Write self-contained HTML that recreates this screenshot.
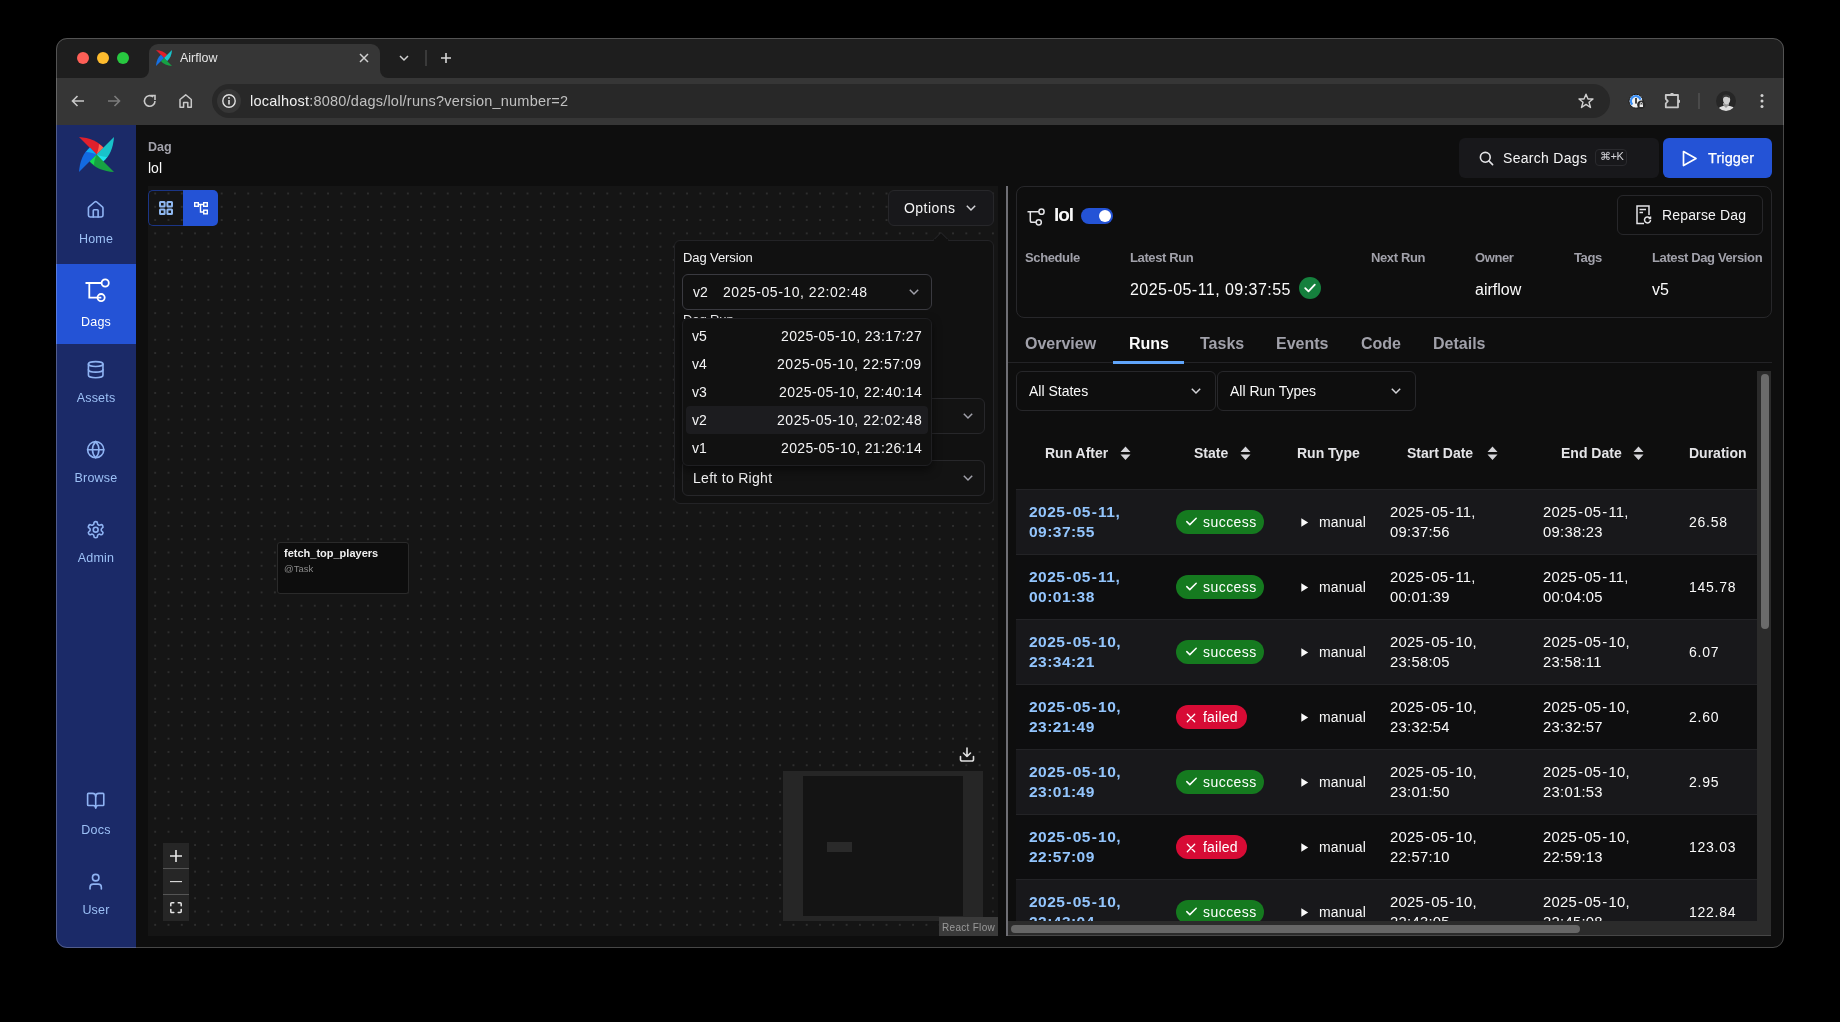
<!DOCTYPE html>
<html><head><meta charset="utf-8">
<style>
*{box-sizing:border-box;margin:0;padding:0}
html,body{width:1840px;height:1022px;overflow:hidden;background:#000;font-family:"Liberation Sans",sans-serif;color:#fafafa}
.a{position:absolute}
svg{display:block;overflow:visible}
.win{position:absolute;left:56px;top:38px;width:1728px;height:910px;border-radius:11px;overflow:hidden;background:#0e0e0e}
.winborder{position:absolute;left:56px;top:38px;width:1728px;height:910px;border-radius:11px;border:1px solid rgba(255,255,255,0.24);pointer-events:none}
.t{position:absolute;white-space:nowrap;line-height:1;will-change:transform}
</style></head>
<body>
<div class="win">
  <div class="a" style="left:0;top:0;width:1728px;height:40px;background:#1e1e1e"></div>
  <div class="a" style="left:0;top:40px;width:1728px;height:47px;background:#363636"></div>
  <div class="a" style="left:0;top:87px;width:80px;height:823px;background:#1b2a68"></div>
</div>
<div id="chrome">
  <!-- active tab -->
  <div class="a" style="left:149px;top:44px;width:231px;height:34px;background:#363636;border-radius:9px 9px 0 0"></div>
  <svg class="a" style="left:141px;top:70px" width="8" height="8"><path d="M8 0 V8 H0 A8 8 0 0 0 8 0Z" fill="#363636"/></svg>
  <svg class="a" style="left:380px;top:70px" width="8" height="8"><path d="M0 0 V8 H8 A8 8 0 0 1 0 0Z" fill="#363636"/></svg>
  <div class="a" style="left:77px;top:52px;width:12px;height:12px;border-radius:50%;background:#fe5f57"></div>
  <div class="a" style="left:97px;top:52px;width:12px;height:12px;border-radius:50%;background:#febc2e"></div>
  <div class="a" style="left:117px;top:52px;width:12px;height:12px;border-radius:50%;background:#28c840"></div>
  <svg class="a" style="left:156px;top:50px" width="16" height="16" viewBox="0 0 100 100">
    <path d="M0 0C30 2 55 12 70 31L50 50Z" fill="#e0202c"/>
    <path d="M100 0C98 30 88 55 69 70L50 50Z" fill="#18c4cc"/>
    <path d="M100 100C70 98 45 88 30 69L50 50Z" fill="#16a244"/>
    <path d="M0 100C2 70 12 45 31 30L50 50Z" fill="#1570e4"/>
  </svg>
  <div class="t" style="left:180px;top:52px;font-size:12.5px;color:#e6e6e6">Airflow</div>
  <svg class="a" style="left:359px;top:53px" width="10" height="10"><path d="M1 1L9 9M9 1L1 9" stroke="#d0d0d0" stroke-width="1.5"/></svg>
  <svg class="a" style="left:399px;top:55px" width="10" height="6"><path d="M1 1L5 5L9 1" stroke="#d0d0d0" stroke-width="1.5" fill="none"/></svg>
  <div class="a" style="left:424.5px;top:50px;width:2px;height:16px;background:#3a3a3a"></div>
  <svg class="a" style="left:441px;top:53px" width="10" height="10"><path d="M5 0V10M0 5H10" stroke="#d8d8d8" stroke-width="1.6"/></svg>
  <!-- nav icons -->
  <svg class="a" style="left:71px;top:95px" width="14" height="12"><path d="M13 6H1.5M6.5 1L1.5 6L6.5 11" stroke="#c8c8c8" stroke-width="1.6" fill="none"/></svg>
  <svg class="a" style="left:107px;top:95px" width="14" height="12"><path d="M1 6H12.5M7.5 1L12.5 6L7.5 11" stroke="#7c7c7c" stroke-width="1.6" fill="none"/></svg>
  <svg class="a" style="left:143px;top:94px" width="14" height="14"><path d="M12 7A5.3 5.3 0 1 1 10.2 3" stroke="#c8c8c8" stroke-width="1.6" fill="none"/><path d="M7.5 1.5H12V6" stroke="#c8c8c8" stroke-width="1.6" fill="none"/></svg>
  <svg class="a" style="left:179px;top:94px" width="14" height="14"><path d="M1 13.2V5.5L6.7 0.8L12.3 5.5V13.2H8.8V8.5H4.6V13.2Z" stroke="#c8c8c8" stroke-width="1.5" fill="none" stroke-linejoin="round"/></svg>
  <!-- url bar -->
  <div class="a" style="left:212px;top:84px;width:1398px;height:34px;border-radius:17px;background:#282828"></div>
  <div class="a" style="left:217px;top:89px;width:24px;height:24px;border-radius:50%;background:#363636"></div>
  <svg class="a" style="left:222px;top:94px" width="14" height="14"><circle cx="7" cy="7" r="6.2" stroke="#e0e0e0" stroke-width="1.4" fill="none"/><path d="M7 6V10.5" stroke="#e0e0e0" stroke-width="1.6"/><circle cx="7" cy="4" r="0.9" fill="#e0e0e0"/></svg>
  <div class="t" style="left:249.5px;top:94px;font-size:14.5px;letter-spacing:0.22px;color:#f0f0f0">localhost<span style="color:#c0c0c0">:8080/dags/lol/runs?version_number=2</span></div>
  <svg class="a" style="left:1578px;top:93px" width="16" height="16"><path d="M8 1.2L10 6H15L11 9.2L12.5 14.5L8 11.4L3.5 14.5L5 9.2L1 6H6Z" stroke="#d0d0d0" stroke-width="1.4" fill="none" stroke-linejoin="round"/></svg>
  <!-- 1password -->
  <svg class="a" style="left:1628px;top:93px" width="18" height="18"><circle cx="8" cy="8.2" r="7" fill="#f2f2f2" stroke="#151515" stroke-width="1"/><path d="M4.3 11.6A5 5 0 1 1 12.6 6.6" fill="none" stroke="#3a8ff5" stroke-width="2.2"/><rect x="7.2" y="5" width="1.6" height="5.6" fill="#1a1a1a"/><circle cx="13.3" cy="11.8" r="4.2" fill="#2a2a2a"/><rect x="11.6" y="11.4" width="3.4" height="2.6" fill="#eee"/><path d="M12.3 11.4V10.4A1 1 0 0 1 14.3 10.4V11.4" fill="none" stroke="#eee" stroke-width="1"/></svg>
  <svg class="a" style="left:1664px;top:92px" width="17" height="17"><path d="M1.8 3H14V15.3H1.8V11.5L3.8 9.2L1.8 6.8Z" fill="none" stroke="#c8c8c8" stroke-width="1.8" stroke-linejoin="round"/><path d="M5.6 3.2L6.8 1H9.2L10.4 3.2Z" fill="#c8c8c8"/><path d="M13.8 7L16 8.2V10.4L13.8 11.6Z" fill="#c8c8c8"/></svg>
  <div class="a" style="left:1698px;top:93px;width:2px;height:16px;background:#4a4a4a"></div>
  <svg class="a" style="left:1716px;top:91px" width="20" height="20"><defs><clipPath id="av"><circle cx="10" cy="10" r="10"/></clipPath></defs><g clip-path="url(#av)"><rect width="20" height="20" fill="#262626"/><ellipse cx="10.5" cy="20" rx="9" ry="5.5" fill="#e0e0e0"/><path d="M7 14L10 17L13 14V12H7Z" fill="#9a9a9a"/><ellipse cx="10.6" cy="8.8" rx="3.6" ry="4.6" fill="#cfcfcf"/><path d="M6.3 7.2Q6.5 3.5 10 3.6Q13.5 3.5 13.7 7.2Q12 5.6 10 5.7Q8 5.6 6.3 7.2Z" fill="#3a3a3a"/></g></svg>
  <svg class="a" style="left:1759px;top:93px" width="6" height="16"><circle cx="3" cy="2.5" r="1.5" fill="#d0d0d0"/><circle cx="3" cy="8" r="1.5" fill="#d0d0d0"/><circle cx="3" cy="13.5" r="1.5" fill="#d0d0d0"/></svg>
</div>

<div id="sidebar">
  <svg class="a" style="left:79px;top:137px" width="35" height="35" viewBox="0 0 100 100">
    <path d="M0 0C30 2 55 12 70 31L50 50Z" fill="#e0202c"/>
    <path d="M57 20C62 23 66 27 70 31L50 50C54 40 57 30 57 20Z" fill="#fd6450"/>
    <path d="M100 0C98 30 88 55 69 70L50 50Z" fill="#18c2ca"/>
    <path d="M80 57C77 62 73 66 69 70L50 50C60 54 70 57 80 57Z" fill="#1ee2ec"/>
    <path d="M100 100C70 98 45 88 30 69L50 50Z" fill="#17a243"/>
    <path d="M43 80C38 77 34 73 30 69L50 50C46 60 43 70 43 80Z" fill="#15dc52"/>
    <path d="M0 100C2 70 12 45 31 30L50 50Z" fill="#136ae2"/>
    <path d="M20 43C23 38 27 34 31 30L50 50C40 46 30 43 20 43Z" fill="#10a8f2"/>
  </svg>
  <!-- Dags selected -->
  <div class="a" style="left:56px;top:264px;width:80px;height:80px;background:#2453d6"></div>
  <!-- Home -->
  <svg class="a" style="left:86.3px;top:200.3px" width="19.4" height="19.4" viewBox="0 0 24 24" fill="none" stroke="#8fb3f3" stroke-width="2" stroke-linecap="round" stroke-linejoin="round"><path d="M15 21v-8a1 1 0 0 0-1-1h-4a1 1 0 0 0-1 1v8"/><path d="M3 10a2 2 0 0 1 .709-1.528l7-5.999a2 2 0 0 1 2.582 0l7 5.999A2 2 0 0 1 21 10v9a2 2 0 0 1-2 2H5a2 2 0 0 1-2-2z"/></svg>
  <div class="t" style="left:56px;width:80px;text-align:center;top:232.5px;font-size:12.5px;letter-spacing:0.2px;color:#9cc0f6">Home</div>
  <!-- Dags -->
  <svg class="a" style="left:85px;top:278px" width="26" height="24" fill="none" stroke="#fff" stroke-width="1.8"><path d="M0.5 5H16.5M4.3 5V19.6H16.3"/><circle cx="20.2" cy="5" r="3.6"/><circle cx="16.1" cy="19.6" r="3.6"/></svg>
  <div class="t" style="left:56px;width:80px;text-align:center;top:316px;font-size:12.5px;letter-spacing:0.2px;color:#fff">Dags</div>
  <!-- Assets -->
  <svg class="a" style="left:86.3px;top:360.3px" width="19.4" height="19.4" viewBox="0 0 24 24" fill="none" stroke="#8fb3f3" stroke-width="2" stroke-linecap="round" stroke-linejoin="round"><ellipse cx="12" cy="5" rx="9" ry="3"/><path d="M3 5V19A9 3 0 0 0 21 19V5"/><path d="M3 12A9 3 0 0 0 21 12"/></svg>
  <div class="t" style="left:56px;width:80px;text-align:center;top:392px;font-size:12.5px;letter-spacing:0.2px;color:#9cc0f6">Assets</div>
  <!-- Browse -->
  <svg class="a" style="left:86.3px;top:440.3px" width="19.4" height="19.4" viewBox="0 0 24 24" fill="none" stroke="#8fb3f3" stroke-width="2" stroke-linecap="round" stroke-linejoin="round"><circle cx="12" cy="12" r="10"/><path d="M12 2a14.5 14.5 0 0 0 0 20 14.5 14.5 0 0 0 0-20"/><path d="M2 12h20"/></svg>
  <div class="t" style="left:56px;width:80px;text-align:center;top:471.5px;font-size:12.5px;letter-spacing:0.2px;color:#9cc0f6">Browse</div>
  <!-- Admin -->
  <svg class="a" style="left:86.3px;top:520.3px" width="19.4" height="19.4" viewBox="0 0 24 24" fill="none" stroke="#8fb3f3" stroke-width="2" stroke-linecap="round" stroke-linejoin="round"><path d="M12.22 2h-.44a2 2 0 0 0-2 2v.18a2 2 0 0 1-1 1.73l-.43.25a2 2 0 0 1-2 0l-.15-.08a2 2 0 0 0-2.73.73l-.22.38a2 2 0 0 0 .73 2.73l.15.1a2 2 0 0 1 1 1.72v.51a2 2 0 0 1-1 1.74l-.15.09a2 2 0 0 0-.73 2.73l.22.38a2 2 0 0 0 2.73.73l.15-.08a2 2 0 0 1 2 0l.43.25a2 2 0 0 1 1 1.73V20a2 2 0 0 0 2 2h.44a2 2 0 0 0 2-2v-.18a2 2 0 0 1 1-1.73l.43-.25a2 2 0 0 1 2 0l.15.08a2 2 0 0 0 2.73-.73l.22-.39a2 2 0 0 0-.73-2.73l-.15-.08a2 2 0 0 1-1-1.74v-.5a2 2 0 0 1 1-1.74l.15-.09a2 2 0 0 0 .73-2.73l-.22-.38a2 2 0 0 0-2.73-.73l-.15.08a2 2 0 0 1-2 0l-.43-.25a2 2 0 0 1-1-1.73V4a2 2 0 0 0-2-2z"/><circle cx="12" cy="12" r="3"/></svg>
  <div class="t" style="left:56px;width:80px;text-align:center;top:551.5px;font-size:12.5px;letter-spacing:0.2px;color:#9cc0f6">Admin</div>
  <!-- Docs -->
  <svg class="a" style="left:86.3px;top:791.3px" width="19.4" height="19.4" viewBox="0 0 24 24" fill="none" stroke="#8fb3f3" stroke-width="2" stroke-linecap="round" stroke-linejoin="round"><path d="M12 7v14"/><path d="M3 18a1 1 0 0 1-1-1V4a1 1 0 0 1 1-1h5a4 4 0 0 1 4 4 4 4 0 0 1 4-4h5a1 1 0 0 1 1 1v13a1 1 0 0 1-1 1h-6a3 3 0 0 0-3 3 3 3 0 0 0-3-3z"/></svg>
  <div class="t" style="left:56px;width:80px;text-align:center;top:823.5px;font-size:12.5px;letter-spacing:0.2px;color:#9cc0f6">Docs</div>
  <!-- User -->
  <svg class="a" style="left:86.3px;top:872.3px" width="19.4" height="19.4" viewBox="0 0 24 24" fill="none" stroke="#8fb3f3" stroke-width="2" stroke-linecap="round" stroke-linejoin="round"><path d="M19 21v-2a4 4 0 0 0-4-4H9a4 4 0 0 0-4 4v2"/><circle cx="12" cy="7" r="4"/></svg>
  <div class="t" style="left:56px;width:80px;text-align:center;top:903.5px;font-size:12.5px;letter-spacing:0.2px;color:#9cc0f6">User</div>
</div>

<div id="left">
  <div class="t" style="left:148px;top:140.5px;font-size:12.5px;font-weight:bold;color:#a1a1aa">Dag</div>
  <div class="t" style="left:148px;top:161px;font-size:14px;color:#fafafa">lol</div>
  <!-- canvas -->
  <div class="a" style="left:148px;top:186px;width:850px;height:750px;background-color:#151515;background-image:radial-gradient(circle,#2e2e2e 0.7px,rgba(0,0,0,0) 1.2px);background-size:13.3px 13.3px;background-position:0.55px 0.85px"></div>
  <!-- separator -->
  <div class="a" style="left:1006px;top:186px;width:2px;height:750px;background:#6e6e74"></div>
  <!-- view toggle -->
  <div class="a" style="left:148px;top:190px;width:36px;height:36px;border:1px solid #1b3585;border-right:none;border-radius:5px 0 0 5px"></div>
  <div class="a" style="left:183px;top:190px;width:35px;height:36px;background:#2453d6;border-radius:0 5px 5px 0"></div>
  <svg class="a" style="left:159px;top:201px" width="14" height="14" fill="none" stroke="#8fb8f0" stroke-width="2"><rect x="1" y="1" width="4.6" height="4.6" rx="0.5"/><rect x="8.4" y="1" width="4.6" height="4.6" rx="0.5"/><rect x="1" y="8.4" width="4.6" height="4.6" rx="0.5"/><rect x="8.4" y="8.4" width="4.6" height="4.6" rx="0.5"/></svg>
  <svg class="a" style="left:194px;top:202px" width="14" height="13" fill="none" stroke="#fff" stroke-width="1.4"><rect x="0.7" y="0.7" width="3.6" height="3.6"/><rect x="9.7" y="0.7" width="3.6" height="3.6"/><rect x="9.7" y="8.2" width="3.6" height="3.6"/><path d="M4.3 2.5H9.7M6.5 2.5V10H9.7"/></svg>
  <!-- options button -->
  <div class="a" style="left:888px;top:190px;width:106px;height:36px;border:1px solid #27272a;border-radius:6px;background:#18181b"></div>
  <div class="t" style="left:904px;top:200.8px;font-size:14px;color:#f4f4f5;letter-spacing:0.45px">Options</div>
  <svg class="a" style="left:966px;top:204.5px" width="10" height="6" fill="none" stroke="#d4d4d8" stroke-width="1.5"><path d="M0.8 0.8L5 5L9.2 0.8"/></svg>
  <!-- popover -->
  <div class="a" style="left:674px;top:240px;width:320px;height:264px;border:1px solid #232326;border-radius:6px;background:#111111"></div>
  <svg class="a" style="left:933px;top:232px" width="16" height="9"><path d="M0 8.6L8 0.6L16 8.6" fill="#111111" stroke="#2a2a2d" stroke-width="1"/></svg>
  <div class="a" style="left:934px;top:239px;width:14px;height:3px;background:#111111"></div>
  <div class="t" style="left:682.5px;top:250.8px;font-size:13px;color:#f4f4f5;letter-spacing:-0.1px">Dag Version</div>
  <div class="a" style="left:682px;top:274px;width:250px;height:36px;border:1px solid #3a3a40;border-radius:6px;background:#111111"></div>
  <div class="t" style="left:693px;top:284.5px;font-size:14px;color:#f4f4f5">v2</div>
  <div class="t" style="left:723px;top:284.5px;font-size:14px;color:#f4f4f5;letter-spacing:0.54px">2025-05-10, 22:02:48</div>
  <svg class="a" style="left:909px;top:289px" width="10" height="6" fill="none" stroke="#a1a1aa" stroke-width="1.5"><path d="M0.8 0.8L5 5L9.2 0.8"/></svg>
  <div class="t" style="left:682.5px;top:313.2px;font-size:13px;color:#f4f4f5;height:5.5px;overflow:hidden;letter-spacing:-0.1px">Dag Run</div>
  <!-- selects 2 & 3 -->
  <div class="a" style="left:682px;top:398px;width:303px;height:36px;border:1px solid #27272a;border-radius:6px;background:#131313"></div>
  <svg class="a" style="left:963px;top:413px" width="10" height="6" fill="none" stroke="#a1a1aa" stroke-width="1.5"><path d="M0.8 0.8L5 5L9.2 0.8"/></svg>
  <div class="a" style="left:682px;top:460px;width:303px;height:36px;border:1px solid #27272a;border-radius:6px;background:#131313"></div>
  <div class="t" style="left:693px;top:470.5px;font-size:14px;color:#f4f4f5;letter-spacing:0.3px">Left to Right</div>
  <svg class="a" style="left:963px;top:475px" width="10" height="6" fill="none" stroke="#a1a1aa" stroke-width="1.5"><path d="M0.8 0.8L5 5L9.2 0.8"/></svg>
  <!-- dropdown list -->
  <div class="a" style="left:682px;top:318px;width:250px;height:148px;border:1px solid #1f1f22;border-radius:6px;background:#111111;box-shadow:0 4px 10px rgba(0,0,0,0.5)"></div>
  <div class="a" style="left:686px;top:406px;width:242px;height:28px;border-radius:4px;background:#1c1c1f"></div>
  <div class="t" style="left:692px;top:328.5px;font-size:14px;color:#f4f4f5">v5</div>
  <div class="t" style="right:918.1px;top:328.5px;font-size:14px;color:#f4f4f5;letter-spacing:0.36px">2025-05-10, 23:17:27</div>
  <div class="t" style="left:692px;top:356.5px;font-size:14px;color:#f4f4f5">v4</div>
  <div class="t" style="right:918.1px;top:356.5px;font-size:14px;color:#f4f4f5;letter-spacing:0.54px">2025-05-10, 22:57:09</div>
  <div class="t" style="left:692px;top:384.5px;font-size:14px;color:#f4f4f5">v3</div>
  <div class="t" style="right:918.1px;top:384.5px;font-size:14px;color:#f4f4f5;letter-spacing:0.47px">2025-05-10, 22:40:14</div>
  <div class="t" style="left:692px;top:412.5px;font-size:14px;color:#f4f4f5">v2</div>
  <div class="t" style="right:918.1px;top:412.5px;font-size:14px;color:#f4f4f5;letter-spacing:0.57px">2025-05-10, 22:02:48</div>
  <div class="t" style="left:692px;top:440.5px;font-size:14px;color:#f4f4f5">v1</div>
  <div class="t" style="right:918.1px;top:440.5px;font-size:14px;color:#f4f4f5;letter-spacing:0.36px">2025-05-10, 21:26:14</div>
  <!-- node -->
  <div class="a" style="left:277px;top:542px;width:132px;height:52px;border:1.3px solid #2a2a2a;border-radius:3px;background:#0d0d0d"></div>
  <div class="t" style="left:284px;top:547.5px;font-size:11px;font-weight:bold;color:#f0f0f0">fetch_top_players</div>
  <div class="t" style="left:284px;top:563.5px;font-size:9.5px;color:#8a8a8a">@Task</div>
  <!-- download icon -->
  <svg class="a" style="left:959px;top:747px" width="16" height="16" fill="none" stroke="#e0e0e0" stroke-width="1.6" stroke-linecap="round" stroke-linejoin="round"><path d="M8 1V9.5M4.5 6L8 9.5L11.5 6"/><path d="M1.5 9.5V12.5A1.5 1.5 0 0 0 3 14H13A1.5 1.5 0 0 0 14.5 12.5V9.5"/></svg>
  <!-- minimap -->
  <div class="a" style="left:783px;top:771px;width:200px;height:150px;background:#262626"></div>
  <div class="a" style="left:803px;top:776px;width:160px;height:140px;background:#141414"></div>
  <div class="a" style="left:827px;top:842px;width:25px;height:10px;background:#2a2a2a"></div>
  <div class="a" style="left:939px;top:917px;width:59px;height:19px;background:#3a3a3a"></div>
  <div class="t" style="left:942px;top:922.5px;font-size:10px;color:#9a9a9a;letter-spacing:0.3px">React Flow</div>
  <!-- zoom controls -->
  <div class="a" style="left:163px;top:843px;width:26px;height:78px;background:#262626"></div>
  <div class="a" style="left:163px;top:868px;width:26px;height:1px;background:#555"></div>
  <div class="a" style="left:163px;top:894px;width:26px;height:1px;background:#555"></div>
  <svg class="a" style="left:169px;top:849px" width="14" height="14" stroke="#e8e8e8" stroke-width="1.6"><path d="M7 1V13M1 7H13"/></svg>
  <svg class="a" style="left:169px;top:875px" width="14" height="14" stroke="#e0e0e0" stroke-width="1.1"><path d="M1 6.6H13"/></svg>
  <svg class="a" style="left:170px;top:902px" width="12" height="12" fill="none" stroke="#e8e8e8" stroke-width="1.5" stroke-linecap="round"><path d="M0.8 3.8V1.8Q0.8 0.8 1.8 0.8H3.8M8.2 0.8H10.2Q11.2 0.8 11.2 1.8V3.8M11.2 7.6V9.6Q11.2 10.6 10.2 10.6H8.2M3.8 10.6H1.8Q0.8 10.6 0.8 9.6V7.6"/></svg>
</div>

<div id="right">
  <div class="a" style="left:1459px;top:138px;width:200px;height:40px;border-radius:6px;background:#18181b"></div>
  <svg class="a" style="left:1478.5px;top:150.5px" width="15" height="15" fill="none" stroke="#e4e4e7" stroke-width="1.6" stroke-linecap="round"><circle cx="6.3" cy="6.3" r="4.9"/><path d="M9.9 9.9L13.6 13.6"/></svg>
  <div class="t" style="left:1503px;top:151px;font-size:14px;color:#f4f4f5;letter-spacing:0.3px">Search Dags</div>
  <div class="a" style="left:1595px;top:149px;width:31.5px;height:17px;border:1px solid #2a2a2e;border-radius:4px"></div>
  <div class="t" style="left:1600px;top:151px;font-size:11px;color:#d4d4d8;letter-spacing:-0.4px">&#8984;+K</div>
  <div class="a" style="left:1663px;top:138px;width:109px;height:40px;border-radius:6px;background:#2453d6"></div>
  <svg class="a" style="left:1682px;top:150px" width="16" height="17" fill="none" stroke="#fff" stroke-width="1.7" stroke-linejoin="round"><path d="M1.5 1.5L14 8.5L1.5 15.5Z"/></svg>
  <div class="t" style="left:1708px;top:151px;font-size:14.5px;color:#fff;letter-spacing:0.1px;-webkit-text-stroke:0.25px #fff">Trigger</div>
  <div class="a" style="left:1016px;top:186px;width:756px;height:132px;border:1px solid #27272a;border-radius:8px"></div>
  <svg class="a" style="left:1027px;top:208px" width="19" height="19" fill="none" stroke="#e4e4e7" stroke-width="1.5"><path d="M0.5 3.7H11.9M3.3 3.7V12.5Q3.3 14.3 5 14.3H9.1"/><circle cx="14.5" cy="3.7" r="2.6"/><circle cx="11.75" cy="14.3" r="2.6"/></svg>
  <div class="t" style="left:1053.5px;top:205px;font-size:19px;font-weight:bold;color:#fafafa;letter-spacing:-1.1px">lol</div>
  <div class="a" style="left:1081px;top:208px;width:32px;height:16px;border-radius:8px;background:#2453d6"></div>
  <div class="a" style="left:1099px;top:210px;width:12px;height:12px;border-radius:50%;background:#fff"></div>
  <div class="a" style="left:1617px;top:195px;width:146px;height:40px;border:1px solid #27272a;border-radius:6px"></div>
  <svg class="a" style="left:1636px;top:205px" width="16" height="20" fill="none" stroke="#e4e4e7" stroke-width="1.5"><path d="M8 18.5H1V1H13V10"/><path d="M3.5 4.5H10M3.5 7.5H7"/><path d="M14.5 15A3 3 0 1 1 13.6 12.8M14.5 11.5V13.5H12.5"/></svg>
  <div class="t" style="left:1661.6px;top:207.5px;font-size:14px;color:#f4f4f5;letter-spacing:0.15px">Reparse Dag</div>
  <div class="t" style="left:1025.3px;top:251px;font-size:13px;font-weight:bold;color:#a1a1aa;letter-spacing:-0.38px">Schedule</div>
  <div class="t" style="left:1130.4px;top:251px;font-size:13px;font-weight:bold;color:#a1a1aa;letter-spacing:-0.38px">Latest Run</div>
  <div class="t" style="left:1371.2px;top:251px;font-size:13px;font-weight:bold;color:#a1a1aa;letter-spacing:-0.38px">Next Run</div>
  <div class="t" style="left:1475px;top:251px;font-size:13px;font-weight:bold;color:#a1a1aa;letter-spacing:-0.38px">Owner</div>
  <div class="t" style="left:1574px;top:251px;font-size:13px;font-weight:bold;color:#a1a1aa;letter-spacing:-0.38px">Tags</div>
  <div class="t" style="left:1652px;top:251px;font-size:13px;font-weight:bold;color:#a1a1aa;letter-spacing:-0.38px">Latest Dag Version</div>
  <div class="t" style="left:1130.4px;top:281.5px;font-size:16px;color:#fafafa;letter-spacing:0.45px">2025-05-11, 09:37:55</div>
  <div class="a" style="left:1299px;top:277px;width:22px;height:22px;border-radius:50%;background:#15803d"></div>
  <svg class="a" style="left:1304px;top:283px" width="12" height="10" fill="none" stroke="#fff" stroke-width="1.8" stroke-linecap="round" stroke-linejoin="round"><path d="M1.2 5.2L4.5 8.4L10.8 1.6"/></svg>
  <div class="t" style="left:1475px;top:282px;font-size:16px;color:#fafafa">airflow</div>
  <div class="t" style="left:1652px;top:282px;font-size:16px;color:#fafafa">v5</div>
  <div class="t" style="left:1024.6px;top:335.8px;font-size:16px;font-weight:bold;color:#a1a1aa">Overview</div>
  <div class="t" style="left:1129px;top:335.8px;font-size:16px;font-weight:bold;color:#fafafa">Runs</div>
  <div class="t" style="left:1200px;top:335.8px;font-size:16px;font-weight:bold;color:#a1a1aa">Tasks</div>
  <div class="t" style="left:1276.3px;top:335.8px;font-size:16px;font-weight:bold;color:#a1a1aa">Events</div>
  <div class="t" style="left:1360.7px;top:335.8px;font-size:16px;font-weight:bold;color:#a1a1aa">Code</div>
  <div class="t" style="left:1433.4px;top:335.8px;font-size:16px;font-weight:bold;color:#a1a1aa">Details</div>
  <div class="a" style="left:1008px;top:362px;width:764px;height:1px;background:#232326"></div>
  <div class="a" style="left:1113px;top:361px;width:71px;height:3px;background:#60a5fa"></div>
  <div class="a" style="left:1008px;top:371px;width:764px;height:550px;overflow:hidden">
    <div class="a" style="left:8.0px;top:0;width:200px;height:40px;border:1px solid #27272a;border-radius:6px"></div>
    <div class="t" style="left:21.2px;top:13.0px;font-size:14px;color:#fafafa">All States</div>
    <svg class="a" style="left:183.0px;top:17.0px" width="10" height="6" fill="none" stroke="#d4d4d8" stroke-width="1.5"><path d="M0.8 0.8L5 5L9.2 0.8"/></svg>
    <div class="a" style="left:208.5px;top:0;width:199px;height:40px;border:1px solid #27272a;border-radius:6px"></div>
    <div class="t" style="left:221.7px;top:13.0px;font-size:14px;color:#fafafa">All Run Types</div>
    <svg class="a" style="left:383.0px;top:17.0px" width="10" height="6" fill="none" stroke="#d4d4d8" stroke-width="1.5"><path d="M0.8 0.8L5 5L9.2 0.8"/></svg>
    <div class="t" style="left:37.4px;top:74.8px;font-size:14px;font-weight:bold;color:#e4e4e7">Run After</div>
    <svg class="a" style="left:111.6px;top:75.0px" width="11" height="15" fill="#d4d4d8"><path d="M5.5 0.5L10.5 6H0.5Z M0.5 8.5H10.5L5.5 14Z"/></svg>
    <div class="t" style="left:185.6px;top:74.8px;font-size:14px;font-weight:bold;color:#e4e4e7">State</div>
    <svg class="a" style="left:232.4px;top:75.0px" width="11" height="15" fill="#d4d4d8"><path d="M5.5 0.5L10.5 6H0.5Z M0.5 8.5H10.5L5.5 14Z"/></svg>
    <div class="t" style="left:289.2px;top:74.8px;font-size:14px;font-weight:bold;color:#e4e4e7">Run Type</div>
    <div class="t" style="left:399.2px;top:74.8px;font-size:14px;font-weight:bold;color:#e4e4e7">Start Date</div>
    <svg class="a" style="left:478.5px;top:75.0px" width="11" height="15" fill="#d4d4d8"><path d="M5.5 0.5L10.5 6H0.5Z M0.5 8.5H10.5L5.5 14Z"/></svg>
    <div class="t" style="left:552.5px;top:74.8px;font-size:14px;font-weight:bold;color:#e4e4e7">End Date</div>
    <svg class="a" style="left:624.5px;top:75.0px" width="11" height="15" fill="#d4d4d8"><path d="M5.5 0.5L10.5 6H0.5Z M0.5 8.5H10.5L5.5 14Z"/></svg>
    <div class="t" style="left:681.3px;top:74.8px;font-size:14px;font-weight:bold;color:#e4e4e7">Duration</div>
    <div class="a" style="left:8.0px;top:118.0px;width:741px;height:65px;background:#18181b;border-top:1px solid #232326"></div>
    <div class="t" style="left:20.7px;top:131.3px;font-size:14px;line-height:20px;font-weight:bold;color:#93c5fd;letter-spacing:0.4px;white-space:pre;transform:scaleX(1.11);transform-origin:0 0">2025<span style="margin:0 0.75px">-</span>05<span style="margin:0 0.75px">-</span>11,
09:37:55</div>
    <div class="a" style="left:168.0px;top:139.0px;width:88px;height:24px;border-radius:12px;background:#157a1f"></div>
    <svg class="a" style="left:178.0px;top:146.0px" width="11" height="9" fill="none" stroke="#fff" stroke-width="1.5" stroke-linecap="round" stroke-linejoin="round"><path d="M0.8 4.6L3.8 7.6L10.2 1.2"/></svg>
    <div class="t" style="left:194.8px;top:144.0px;font-size:14px;color:#fff;letter-spacing:0.45px">success</div>
    <svg class="a" style="left:293.0px;top:147.0px" width="8" height="9" fill="#fafafa"><path d="M0.3 0.3L7.2 4.5L0.3 8.7Z"/></svg>
    <div class="t" style="left:310.8px;top:144.0px;font-size:14px;color:#fafafa;letter-spacing:0.2px">manual</div>
    <div class="t" style="left:381.8px;top:131.3px;font-size:14px;line-height:20px;color:#fafafa;letter-spacing:0.25px;white-space:pre;transform:scaleX(1.058);transform-origin:0 0">2025<span style="margin:0 0.95px">-</span>05<span style="margin:0 0.95px">-</span>11,
09:37:56</div>
    <div class="t" style="left:535.1px;top:131.3px;font-size:14px;line-height:20px;color:#fafafa;letter-spacing:0.25px;white-space:pre;transform:scaleX(1.058);transform-origin:0 0">2025<span style="margin:0 0.95px">-</span>05<span style="margin:0 0.95px">-</span>11,
09:38:23</div>
    <div class="t" style="left:680.8px;top:144.0px;font-size:14px;color:#fafafa;letter-spacing:0.75px">26.58</div>
    <div class="a" style="left:8.0px;top:183.0px;width:741px;height:65px;background:#0e0e0f;border-top:1px solid #232326"></div>
    <div class="t" style="left:20.7px;top:196.3px;font-size:14px;line-height:20px;font-weight:bold;color:#93c5fd;letter-spacing:0.4px;white-space:pre;transform:scaleX(1.11);transform-origin:0 0">2025<span style="margin:0 0.75px">-</span>05<span style="margin:0 0.75px">-</span>11,
00:01:38</div>
    <div class="a" style="left:168.0px;top:204.0px;width:88px;height:24px;border-radius:12px;background:#157a1f"></div>
    <svg class="a" style="left:178.0px;top:211.0px" width="11" height="9" fill="none" stroke="#fff" stroke-width="1.5" stroke-linecap="round" stroke-linejoin="round"><path d="M0.8 4.6L3.8 7.6L10.2 1.2"/></svg>
    <div class="t" style="left:194.8px;top:209.0px;font-size:14px;color:#fff;letter-spacing:0.45px">success</div>
    <svg class="a" style="left:293.0px;top:212.0px" width="8" height="9" fill="#fafafa"><path d="M0.3 0.3L7.2 4.5L0.3 8.7Z"/></svg>
    <div class="t" style="left:310.8px;top:209.0px;font-size:14px;color:#fafafa;letter-spacing:0.2px">manual</div>
    <div class="t" style="left:381.8px;top:196.3px;font-size:14px;line-height:20px;color:#fafafa;letter-spacing:0.25px;white-space:pre;transform:scaleX(1.058);transform-origin:0 0">2025<span style="margin:0 0.95px">-</span>05<span style="margin:0 0.95px">-</span>11,
00:01:39</div>
    <div class="t" style="left:535.1px;top:196.3px;font-size:14px;line-height:20px;color:#fafafa;letter-spacing:0.25px;white-space:pre;transform:scaleX(1.058);transform-origin:0 0">2025<span style="margin:0 0.95px">-</span>05<span style="margin:0 0.95px">-</span>11,
00:04:05</div>
    <div class="t" style="left:680.8px;top:209.0px;font-size:14px;color:#fafafa;letter-spacing:0.75px">145.78</div>
    <div class="a" style="left:8.0px;top:248.0px;width:741px;height:65px;background:#18181b;border-top:1px solid #232326"></div>
    <div class="t" style="left:20.7px;top:261.3px;font-size:14px;line-height:20px;font-weight:bold;color:#93c5fd;letter-spacing:0.4px;white-space:pre;transform:scaleX(1.11);transform-origin:0 0">2025<span style="margin:0 0.75px">-</span>05<span style="margin:0 0.75px">-</span>10,
23:34:21</div>
    <div class="a" style="left:168.0px;top:269.0px;width:88px;height:24px;border-radius:12px;background:#157a1f"></div>
    <svg class="a" style="left:178.0px;top:276.0px" width="11" height="9" fill="none" stroke="#fff" stroke-width="1.5" stroke-linecap="round" stroke-linejoin="round"><path d="M0.8 4.6L3.8 7.6L10.2 1.2"/></svg>
    <div class="t" style="left:194.8px;top:274.0px;font-size:14px;color:#fff;letter-spacing:0.45px">success</div>
    <svg class="a" style="left:293.0px;top:277.0px" width="8" height="9" fill="#fafafa"><path d="M0.3 0.3L7.2 4.5L0.3 8.7Z"/></svg>
    <div class="t" style="left:310.8px;top:274.0px;font-size:14px;color:#fafafa;letter-spacing:0.2px">manual</div>
    <div class="t" style="left:381.8px;top:261.3px;font-size:14px;line-height:20px;color:#fafafa;letter-spacing:0.25px;white-space:pre;transform:scaleX(1.058);transform-origin:0 0">2025<span style="margin:0 0.95px">-</span>05<span style="margin:0 0.95px">-</span>10,
23:58:05</div>
    <div class="t" style="left:535.1px;top:261.3px;font-size:14px;line-height:20px;color:#fafafa;letter-spacing:0.25px;white-space:pre;transform:scaleX(1.058);transform-origin:0 0">2025<span style="margin:0 0.95px">-</span>05<span style="margin:0 0.95px">-</span>10,
23:58:11</div>
    <div class="t" style="left:680.8px;top:274.0px;font-size:14px;color:#fafafa;letter-spacing:0.75px">6.07</div>
    <div class="a" style="left:8.0px;top:313.0px;width:741px;height:65px;background:#0e0e0f;border-top:1px solid #232326"></div>
    <div class="t" style="left:20.7px;top:326.3px;font-size:14px;line-height:20px;font-weight:bold;color:#93c5fd;letter-spacing:0.4px;white-space:pre;transform:scaleX(1.11);transform-origin:0 0">2025<span style="margin:0 0.75px">-</span>05<span style="margin:0 0.75px">-</span>10,
23:21:49</div>
    <div class="a" style="left:168.0px;top:334.0px;width:71px;height:24px;border-radius:12px;background:#d70b35"></div>
    <svg class="a" style="left:178.0px;top:341.5px" width="10" height="10" fill="none" stroke="#fff" stroke-width="1.3" stroke-linecap="round"><path d="M1.3 1.3L8.7 8.7M8.7 1.3L1.3 8.7"/></svg>
    <div class="t" style="left:194.8px;top:339.0px;font-size:14px;color:#fff;letter-spacing:0.2px">failed</div>
    <svg class="a" style="left:293.0px;top:342.0px" width="8" height="9" fill="#fafafa"><path d="M0.3 0.3L7.2 4.5L0.3 8.7Z"/></svg>
    <div class="t" style="left:310.8px;top:339.0px;font-size:14px;color:#fafafa;letter-spacing:0.2px">manual</div>
    <div class="t" style="left:381.8px;top:326.3px;font-size:14px;line-height:20px;color:#fafafa;letter-spacing:0.25px;white-space:pre;transform:scaleX(1.058);transform-origin:0 0">2025<span style="margin:0 0.95px">-</span>05<span style="margin:0 0.95px">-</span>10,
23:32:54</div>
    <div class="t" style="left:535.1px;top:326.3px;font-size:14px;line-height:20px;color:#fafafa;letter-spacing:0.25px;white-space:pre;transform:scaleX(1.058);transform-origin:0 0">2025<span style="margin:0 0.95px">-</span>05<span style="margin:0 0.95px">-</span>10,
23:32:57</div>
    <div class="t" style="left:680.8px;top:339.0px;font-size:14px;color:#fafafa;letter-spacing:0.75px">2.60</div>
    <div class="a" style="left:8.0px;top:378.0px;width:741px;height:65px;background:#18181b;border-top:1px solid #232326"></div>
    <div class="t" style="left:20.7px;top:391.3px;font-size:14px;line-height:20px;font-weight:bold;color:#93c5fd;letter-spacing:0.4px;white-space:pre;transform:scaleX(1.11);transform-origin:0 0">2025<span style="margin:0 0.75px">-</span>05<span style="margin:0 0.75px">-</span>10,
23:01:49</div>
    <div class="a" style="left:168.0px;top:399.0px;width:88px;height:24px;border-radius:12px;background:#157a1f"></div>
    <svg class="a" style="left:178.0px;top:406.0px" width="11" height="9" fill="none" stroke="#fff" stroke-width="1.5" stroke-linecap="round" stroke-linejoin="round"><path d="M0.8 4.6L3.8 7.6L10.2 1.2"/></svg>
    <div class="t" style="left:194.8px;top:404.0px;font-size:14px;color:#fff;letter-spacing:0.45px">success</div>
    <svg class="a" style="left:293.0px;top:407.0px" width="8" height="9" fill="#fafafa"><path d="M0.3 0.3L7.2 4.5L0.3 8.7Z"/></svg>
    <div class="t" style="left:310.8px;top:404.0px;font-size:14px;color:#fafafa;letter-spacing:0.2px">manual</div>
    <div class="t" style="left:381.8px;top:391.3px;font-size:14px;line-height:20px;color:#fafafa;letter-spacing:0.25px;white-space:pre;transform:scaleX(1.058);transform-origin:0 0">2025<span style="margin:0 0.95px">-</span>05<span style="margin:0 0.95px">-</span>10,
23:01:50</div>
    <div class="t" style="left:535.1px;top:391.3px;font-size:14px;line-height:20px;color:#fafafa;letter-spacing:0.25px;white-space:pre;transform:scaleX(1.058);transform-origin:0 0">2025<span style="margin:0 0.95px">-</span>05<span style="margin:0 0.95px">-</span>10,
23:01:53</div>
    <div class="t" style="left:680.8px;top:404.0px;font-size:14px;color:#fafafa;letter-spacing:0.75px">2.95</div>
    <div class="a" style="left:8.0px;top:443.0px;width:741px;height:65px;background:#0e0e0f;border-top:1px solid #232326"></div>
    <div class="t" style="left:20.7px;top:456.3px;font-size:14px;line-height:20px;font-weight:bold;color:#93c5fd;letter-spacing:0.4px;white-space:pre;transform:scaleX(1.11);transform-origin:0 0">2025<span style="margin:0 0.75px">-</span>05<span style="margin:0 0.75px">-</span>10,
22:57:09</div>
    <div class="a" style="left:168.0px;top:464.0px;width:71px;height:24px;border-radius:12px;background:#d70b35"></div>
    <svg class="a" style="left:178.0px;top:471.5px" width="10" height="10" fill="none" stroke="#fff" stroke-width="1.3" stroke-linecap="round"><path d="M1.3 1.3L8.7 8.7M8.7 1.3L1.3 8.7"/></svg>
    <div class="t" style="left:194.8px;top:469.0px;font-size:14px;color:#fff;letter-spacing:0.2px">failed</div>
    <svg class="a" style="left:293.0px;top:472.0px" width="8" height="9" fill="#fafafa"><path d="M0.3 0.3L7.2 4.5L0.3 8.7Z"/></svg>
    <div class="t" style="left:310.8px;top:469.0px;font-size:14px;color:#fafafa;letter-spacing:0.2px">manual</div>
    <div class="t" style="left:381.8px;top:456.3px;font-size:14px;line-height:20px;color:#fafafa;letter-spacing:0.25px;white-space:pre;transform:scaleX(1.058);transform-origin:0 0">2025<span style="margin:0 0.95px">-</span>05<span style="margin:0 0.95px">-</span>10,
22:57:10</div>
    <div class="t" style="left:535.1px;top:456.3px;font-size:14px;line-height:20px;color:#fafafa;letter-spacing:0.25px;white-space:pre;transform:scaleX(1.058);transform-origin:0 0">2025<span style="margin:0 0.95px">-</span>05<span style="margin:0 0.95px">-</span>10,
22:59:13</div>
    <div class="t" style="left:680.8px;top:469.0px;font-size:14px;color:#fafafa;letter-spacing:0.75px">123.03</div>
    <div class="a" style="left:8.0px;top:508.0px;width:741px;height:65px;background:#18181b;border-top:1px solid #232326"></div>
    <div class="t" style="left:20.7px;top:521.3px;font-size:14px;line-height:20px;font-weight:bold;color:#93c5fd;letter-spacing:0.4px;white-space:pre;transform:scaleX(1.11);transform-origin:0 0">2025<span style="margin:0 0.75px">-</span>05<span style="margin:0 0.75px">-</span>10,
22:43:04</div>
    <div class="a" style="left:168.0px;top:529.0px;width:88px;height:24px;border-radius:12px;background:#157a1f"></div>
    <svg class="a" style="left:178.0px;top:536.0px" width="11" height="9" fill="none" stroke="#fff" stroke-width="1.5" stroke-linecap="round" stroke-linejoin="round"><path d="M0.8 4.6L3.8 7.6L10.2 1.2"/></svg>
    <div class="t" style="left:194.8px;top:534.0px;font-size:14px;color:#fff;letter-spacing:0.45px">success</div>
    <svg class="a" style="left:293.0px;top:537.0px" width="8" height="9" fill="#fafafa"><path d="M0.3 0.3L7.2 4.5L0.3 8.7Z"/></svg>
    <div class="t" style="left:310.8px;top:534.0px;font-size:14px;color:#fafafa;letter-spacing:0.2px">manual</div>
    <div class="t" style="left:381.8px;top:521.3px;font-size:14px;line-height:20px;color:#fafafa;letter-spacing:0.25px;white-space:pre;transform:scaleX(1.058);transform-origin:0 0">2025<span style="margin:0 0.95px">-</span>05<span style="margin:0 0.95px">-</span>10,
22:43:05</div>
    <div class="t" style="left:535.1px;top:521.3px;font-size:14px;line-height:20px;color:#fafafa;letter-spacing:0.25px;white-space:pre;transform:scaleX(1.058);transform-origin:0 0">2025<span style="margin:0 0.95px">-</span>05<span style="margin:0 0.95px">-</span>10,
22:45:08</div>
    <div class="t" style="left:680.8px;top:534.0px;font-size:14px;color:#fafafa;letter-spacing:0.75px">122.84</div>
  </div>
  <div class="a" style="left:1757px;top:371px;width:14px;height:565px;background:#2b2b2b"></div>
  <div class="a" style="left:1761px;top:373.5px;width:8px;height:255px;border-radius:4px;background:#6b6b6b"></div>
  <div class="a" style="left:1008px;top:921px;width:763px;height:15px;background:#2b2b2b;border-bottom:1px solid #474747"></div>
  <div class="a" style="left:1011px;top:925px;width:569px;height:8px;border-radius:4px;background:#666"></div>
</div>
<div class="winborder"></div>
</body></html>
